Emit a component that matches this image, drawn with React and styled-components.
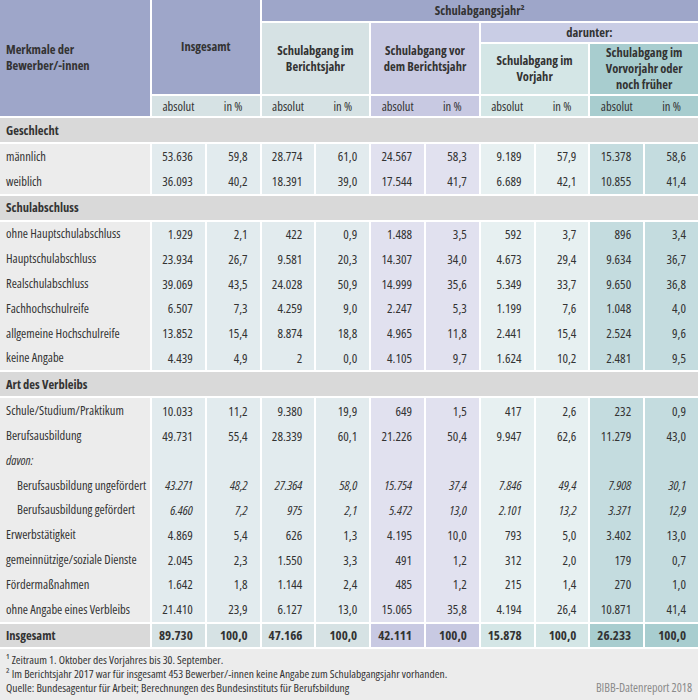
import React from 'react';
import styled, { createGlobalStyle } from 'styled-components';

const GlobalStyle = createGlobalStyle`
  body {
    margin: 0;
    background: #ffffff;
    font-family: "Open Sans", Roboto, sans-serif;
    font-stretch: condensed;
    color: #333333;
  }
`;

const colors = {
  head: '#9ea6c9',
  darunter: '#c9cde5',
  label: '#ececec',
  section: '#d9d9d9',
  groups: [
    { head: '#d6e2e4', body: '#e2ebee' },
    { head: '#d6e2e4', body: '#e2ebee' },
    { head: '#c8c9e2', body: '#e1e1ef' },
    { head: '#d4e6e6', body: '#e7f0f1' },
    { head: '#a8cdcf', body: '#c4dcdf' },
  ],
};

const Page = styled.div`
  width: 700px;
  height: 700px;
  overflow: hidden;
  background: #ffffff;
  font-size: 12.5px;
`;

const Grid = styled.div`
  display: grid;
  grid-template-columns: 150px repeat(10, 1fr);
  column-gap: 2px;
  width: 698px;
`;

const HeadGrid = styled(Grid)`
  grid-template-rows: 21px 19px 50px 20px;
  row-gap: 2px;
`;

const HeadCell = styled.div`
  grid-column: ${p => p.$col};
  grid-row: ${p => p.$row};
  background: ${p => p.$bg};
  display: flex;
  align-items: center;
  justify-content: ${p => (p.$left ? 'flex-start' : 'center')};
  text-align: ${p => (p.$left ? 'left' : 'center')};
  padding: ${p => (p.$left ? '0 6px' : '0 2px')};
  font-weight: 700;
  line-height: 16px;
  white-space: nowrap;
`;

const UnitCell = styled.div`
  grid-column: ${p => p.$col};
  grid-row: 4;
  background: ${p => p.$bg};
  display: grid;
  grid-template-columns: 1fr 1fr;
  column-gap: 2px;
  align-items: center;
  text-align: center;
`;

const BodyGrid = styled(Grid)`
  grid-auto-rows: auto;
`;

const SectionRow = styled.div`
  grid-column: 1 / -1;
  height: 24px;
  margin: 2px 0;
  background: ${colors.section};
  display: flex;
  align-items: center;
  padding-left: 6px;
  font-weight: 700;
`;

const LabelCell = styled.div`
  height: ${p => (p.$total ? '23px' : '24.8px')};
  margin-top: ${p => (p.$total ? '2px' : '0')};
  background: ${p => (p.$total ? colors.section : colors.label)};
  display: flex;
  align-items: center;
  padding-left: ${p => (p.$indent ? '17px' : '6px')};
  font-weight: ${p => (p.$total ? 700 : 400)};
  font-style: ${p => (p.$italic ? 'italic' : 'normal')};
  white-space: nowrap;
  overflow: hidden;
`;

const NumCell = styled.div`
  height: ${p => (p.$total ? '23px' : '24.8px')};
  margin-top: ${p => (p.$total ? '2px' : '0')};
  background: ${p => p.$bg};
  display: flex;
  align-items: center;
  justify-content: flex-end;
  padding-right: 12px;
  font-size: 13px;
  font-weight: ${p => (p.$total ? 700 : 400)};
  font-style: ${p => (p.$italic ? 'italic' : 'normal')};
`;

const Footer = styled.div`
  width: 698px;
  height: 51px;
  margin-top: 2px;
  background: ${colors.label};
  padding: 4px 6px 0;
  box-sizing: border-box;
  font-size: 11.5px;
  line-height: 14px;
`;

const FootLine = styled.div`
  display: flex;
  justify-content: space-between;
`;

const Brand = styled.span`
  color: #8a8a8a;
  font-size: 12px;
`;

const sections = [
  {
    title: 'Geschlecht',
    rows: [
      ['männlich', '53.636', '59,8', '28.774', '61,0', '24.567', '58,3', '9.189', '57,9', '15.378', '58,6'],
      ['weiblich', '36.093', '40,2', '18.391', '39,0', '17.544', '41,7', '6.689', '42,1', '10.855', '41,4'],
    ],
  },
  {
    title: 'Schulabschluss',
    rows: [
      ['ohne Hauptschulabschluss', '1.929', '2,1', '422', '0,9', '1.488', '3,5', '592', '3,7', '896', '3,4'],
      ['Hauptschulabschluss', '23.934', '26,7', '9.581', '20,3', '14.307', '34,0', '4.673', '29,4', '9.634', '36,7'],
      ['Realschulabschluss', '39.069', '43,5', '24.028', '50,9', '14.999', '35,6', '5.349', '33,7', '9.650', '36,8'],
      ['Fachhochschulreife', '6.507', '7,3', '4.259', '9,0', '2.247', '5,3', '1.199', '7,6', '1.048', '4,0'],
      ['allgemeine Hochschulreife', '13.852', '15,4', '8.874', '18,8', '4.965', '11,8', '2.441', '15,4', '2.524', '9,6'],
      ['keine Angabe', '4.439', '4,9', '2', '0,0', '4.105', '9,7', '1.624', '10,2', '2.481', '9,5'],
    ],
  },
  {
    title: 'Art des Verbleibs',
    rows: [
      ['Schule/Studium/Praktikum', '10.033', '11,2', '9.380', '19,9', '649', '1,5', '417', '2,6', '232', '0,9'],
      ['Berufsausbildung', '49.731', '55,4', '28.339', '60,1', '21.226', '50,4', '9.947', '62,6', '11.279', '43,0'],
      { label: 'davon:', italicLabel: true, values: [] },
      { label: 'Berufsausbildung ungefördert', indent: true, italic: true, values: ['43.271', '48,2', '27.364', '58,0', '15.754', '37,4', '7.846', '49,4', '7.908', '30,1'] },
      { label: 'Berufsausbildung gefördert', indent: true, italic: true, values: ['6.460', '7,2', '975', '2,1', '5.472', '13,0', '2.101', '13,2', '3.371', '12,9'] },
      ['Erwerbstätigkeit', '4.869', '5,4', '626', '1,3', '4.195', '10,0', '793', '5,0', '3.402', '13,0'],
      ['gemeinnützige/soziale Dienste', '2.045', '2,3', '1.550', '3,3', '491', '1,2', '312', '2,0', '179', '0,7'],
      ['Fördermaßnahmen', '1.642', '1,8', '1.144', '2,4', '485', '1,2', '215', '1,4', '270', '1,0'],
      ['ohne Angabe eines Verbleibs', '21.410', '23,9', '6.127', '13,0', '15.065', '35,8', '4.194', '26,4', '10.871', '41,4'],
    ],
  },
];

const total = ['89.730', '100,0', '47.166', '100,0', '42.111', '100,0', '15.878', '100,0', '26.233', '100,0'];

const normalize = row =>
  Array.isArray(row) ? { label: row[0], values: row.slice(1) } : row;

const DataRow = ({ row, isTotal }) => {
  const values = row.values.length ? row.values : Array(10).fill('');
  return (
    <>
      <LabelCell $indent={row.indent} $italic={row.italicLabel} $total={isTotal}>
        {row.label}
      </LabelCell>
      {values.map((v, i) => {
        const group = colors.groups[Math.floor(i / 2)];
        return (
          <NumCell
            key={i}
            $bg={isTotal ? group.head : group.body}
            $italic={row.italic}
            $total={isTotal}
          >
            {v}
          </NumCell>
        );
      })}
    </>
  );
};

const App = () => {
  const unitCols = ['2 / 4', '4 / 6', '6 / 8', '8 / 10', '10 / 12'];

  return (
    <Page>
      <GlobalStyle />
      <HeadGrid>
        <HeadCell $col="1" $row="1 / 5" $bg={colors.head} $left>
          Merkmale der<br />Bewerber/-innen
        </HeadCell>
        <HeadCell $col="2 / 4" $row="1 / 4" $bg={colors.head}>
          Insgesamt
        </HeadCell>
        <HeadCell $col="4 / 12" $row="1" $bg={colors.head}>
          Schulabgangsjahr²
        </HeadCell>
        <HeadCell $col="4 / 6" $row="2 / 4" $bg={colors.groups[1].head}>
          Schulabgang im<br />Berichtsjahr
        </HeadCell>
        <HeadCell $col="6 / 8" $row="2 / 4" $bg={colors.groups[2].head}>
          Schulabgang vor<br />dem Berichtsjahr
        </HeadCell>
        <HeadCell $col="8 / 12" $row="2" $bg={colors.darunter}>
          darunter:
        </HeadCell>
        <HeadCell $col="8 / 10" $row="3" $bg={colors.groups[3].head}>
          Schulabgang im<br />Vorjahr
        </HeadCell>
        <HeadCell $col="10 / 12" $row="3" $bg={colors.groups[4].head}>
          Schulabgang im<br />Vorvorjahr oder<br />noch früher
        </HeadCell>
        {unitCols.map((col, i) => (
          <UnitCell key={col} $col={col} $bg={colors.groups[i].head}>
            <span>absolut</span>
            <span>in %</span>
          </UnitCell>
        ))}
      </HeadGrid>

      <BodyGrid>
        {sections.map(section => (
          <React.Fragment key={section.title}>
            <SectionRow>{section.title}</SectionRow>
            {section.rows.map(r => {
              const row = normalize(r);
              return <DataRow key={row.label} row={row} />;
            })}
          </React.Fragment>
        ))}
        <DataRow row={{ label: 'Insgesamt', values: total }} isTotal />
      </BodyGrid>

      <Footer>
        <FootLine>¹ Zeitraum 1. Oktober des Vorjahres bis 30. September.</FootLine>
        <FootLine>
          ² Im Berichtsjahr 2017 war für insgesamt 453 Bewerber/-innen keine Angabe zum Schulabgangsjahr vorhanden.
        </FootLine>
        <FootLine>
          <span>Quelle: Bundesagentur für Arbeit; Berechnungen des Bundesinstituts für Berufsbildung</span>
          <Brand>BIBB-Datenreport 2018</Brand>
        </FootLine>
      </Footer>
    </Page>
  );
};

export default App;
